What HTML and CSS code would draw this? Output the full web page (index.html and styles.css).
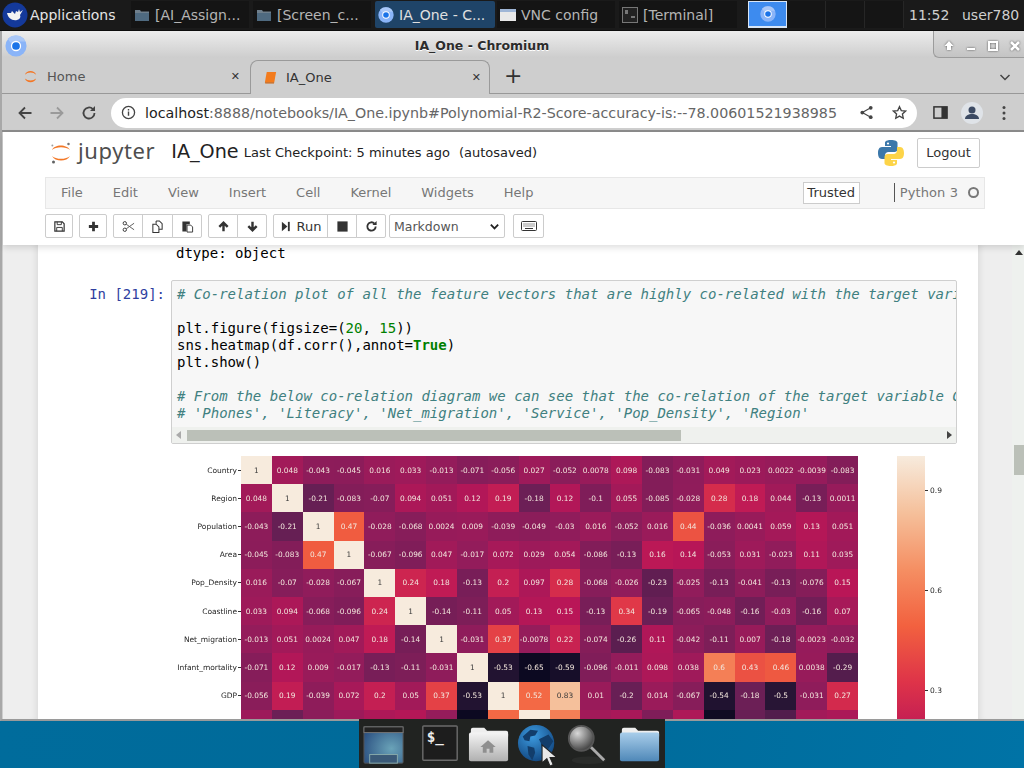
FILE: index.html
```html
<!DOCTYPE html>
<html lang="en">
<head>
  <meta charset="UTF-8" />
  <title>IA_One - Chromium</title>
  <link rel="stylesheet" href="styles.css">
</head>
<body>
  <svg class="defs" width="0" height="0">
    <defs>
      <symbol id="chromium" viewBox="0 0 24 24">
        <circle cx="12" cy="12" r="11.5" fill="#8ab4f8"/>
        <path d="M12 .5A11.5 11.5 0 0 1 22.4 7H12a5 5 0 0 0-4.7 3.2L3 4.2A11.5 11.5 0 0 1 12 .5z" fill="#a9c7f7"/>
        <circle cx="12" cy="12" r="5.6" fill="#fff"/>
        <circle cx="12" cy="12" r="4.2" fill="#1a73e8"/>
      </symbol>
      <symbol id="folder" viewBox="0 0 16 14">
        <path d="M1 2h5l1 1.5h8V13H1z" fill="#6f7f8c"/>
        <path d="M1 5h14v8H1z" fill="#4f6a80"/>
      </symbol>
    </defs>
  </svg>

  <!-- Top panel -->
  <header class="panel">
    <div class="panel-apps">
      <svg class="xfce-logo" viewBox="0 0 26 26">
        <circle cx="13" cy="13" r="12.5" fill="#14399a"/>
        <path d="M5 11c1 5 5 8 10 7 3-.6 4-3 3-5l3-5-3 2-1-3-1 3-2-1-1 3-3-3-1 2z" fill="#f2f2f2"/>
      </svg>
      <span>Applications</span>
    </div>
    <div class="task">
      <svg class="task-icon"><use href="#folder"/></svg><span>[AI_Assign...</span>
    </div>
    <div class="task">
      <svg class="task-icon"><use href="#folder"/></svg><span>[Screen_c...</span>
    </div>
    <div class="task task-active">
      <svg class="task-icon"><use href="#chromium"/></svg><span>IA_One - C...</span>
    </div>
    <div class="task">
      <svg class="task-icon" viewBox="0 0 16 14"><rect x="0" y="1" width="16" height="12" fill="#e8e8e8"/><rect x="0" y="1" width="16" height="3" fill="#9fb6d6"/></svg><span>VNC config</span>
    </div>
    <div class="task">
      <svg class="task-icon" viewBox="0 0 16 16"><rect x=".5" y=".5" width="15" height="15" fill="#222" stroke="#777"/><path d="M3 4h3M3 6h3M9 10h4" stroke="#ccc"/></svg><span>[Terminal]</span>
    </div>
    <div class="pager">
      <div class="pager-cell pager-on"><svg class="pager-icon"><use href="#chromium"/></svg></div>
      <div class="pager-cell"></div>
      <div class="pager-cell"></div>
      <div class="pager-cell"></div>
    </div>
    <div class="clock">11:52</div>
    <div class="user">user780</div>
  </header>

  <!-- Browser window -->
  <main class="window">
    <div class="titlebar">
      <svg class="title-logo"><use href="#chromium"/></svg>
      <span class="title-text">IA_One - Chromium</span>
      <div class="wm-buttons">
        <svg viewBox="0 0 12 12"><path d="M6 1l4.500 5H8v4H4V6H1.500z" fill="#fff"/></svg>
        <svg viewBox="0 0 12 12"><path d="M2 8h8v2H2z" fill="#fff"/></svg>
        <svg viewBox="0 0 12 12"><rect x="2" y="2" width="8" height="8" fill="none" stroke="#fff" stroke-width="2"/></svg>
        <svg viewBox="0 0 12 12"><path d="M2 2l8 8M10 2l-8 8" stroke="#fff" stroke-width="2.500"/></svg>
      </div>
    </div>

    <div class="tabstrip">
      <div class="tab">
        <svg class="tab-icon" viewBox="0 0 16 16"><path d="M2 6a6.500 6.500 0 0 1 12 0 9 9 0 0 0-12 0zM2 10a6.500 6.500 0 0 0 12 0 9 9 0 0 1-12 0z" fill="#f37726"/></svg>
        <span class="tab-title">Home</span>
        <span class="tab-close">✕</span>
      </div>
      <div class="tab tab-active">
        <svg class="tab-icon" viewBox="0 0 16 16"><path d="M4 2h10l-2 11H2z" fill="#f37b1d"/><path d="M2 13h10l-.3 1.500H2.500z" fill="#c9600f"/></svg>
        <span class="tab-title">IA_One</span>
        <span class="tab-close">✕</span>
      </div>
      <span class="tab-new">+</span>
      <svg class="tab-more" viewBox="0 0 12 12"><path d="M1.500 4l4.500 4.500L10.500 4" fill="none" stroke="#444" stroke-width="1.500"/></svg>
    </div>

    <div class="toolbar">
      <svg class="nav-icon" viewBox="0 0 16 16"><path d="M14.500 8H2.500M8 2.500L2.500 8 8 13.500" fill="none" stroke="#444" stroke-width="1.800"/></svg>
      <svg class="nav-icon" viewBox="0 0 16 16"><path d="M1.500 8h12M8 2.500L13.500 8 8 13.500" fill="none" stroke="#9a9a9a" stroke-width="1.800"/></svg>
      <svg class="nav-icon" viewBox="0 0 16 16"><path d="M13.500 8a5.500 5.500 0 1 1-1.600-3.900" fill="none" stroke="#444" stroke-width="1.800"/><path d="M14 1v5H9z" fill="#444"/></svg>
      <div class="omnibox">
        <svg class="omni-info" viewBox="0 0 16 16"><circle cx="8" cy="8" r="6.500" fill="none" stroke="#444" stroke-width="1.400"/><path d="M8 7v4.500M8 4.300v1.500" stroke="#444" stroke-width="1.500"/></svg>
        <span class="url"><b>localhost</b>:8888/notebooks/IA_One.ipynb#Polynomial-R2-Score-accuracy-is:--78.00601521938985</span>
        <svg class="omni-icon" viewBox="0 0 16 16"><circle cx="12.500" cy="3" r="2" fill="#444"/><circle cx="3.500" cy="8" r="2" fill="#444"/><circle cx="12.500" cy="13" r="2" fill="#444"/><path d="M12.500 3l-9 5 9 5" fill="none" stroke="#444" stroke-width="1.200"/></svg>
        <svg class="omni-icon" viewBox="0 0 16 16"><path d="M8 1.800l1.900 4.200 4.600.5-3.400 3.100.9 4.500L8 11.800 4 14.100l.9-4.500L1.500 6.500 6.100 6z" fill="none" stroke="#444" stroke-width="1.400"/></svg>
      </div>
      <svg class="side-icon" viewBox="0 0 16 16"><rect x="1" y="2" width="14" height="12" fill="none" stroke="#333" stroke-width="1.600"/><rect x="9" y="2" width="6" height="12" fill="#333"/></svg>
      <div class="avatar">
        <svg viewBox="0 0 22 22"><circle cx="11" cy="8" r="3.500" fill="#3c4a63"/><path d="M4 17c0-3.500 3.500-5 7-5s7 1.500 7 5z" fill="#3c4a63"/></svg>
      </div>
      <svg class="dots" viewBox="0 0 4 16"><circle cx="2" cy="2.500" r="1.500" fill="#444"/><circle cx="2" cy="8" r="1.500" fill="#444"/><circle cx="2" cy="13.500" r="1.500" fill="#444"/></svg>
    </div>

    <!-- Jupyter page -->
    <div class="page">
      <div class="nb-head">
        <div class="nb-header">
          <svg class="jp-logo" viewBox="0 0 32 30">
            <path d="M4 11C7 3 24 3 28 11 23 6 9 6 4 11zM4 19c4 8 20 8 24 0-5 5-19 5-24 0z" fill="#f37726"/>
            <circle cx="26" cy="3" r="1.700" fill="#767677"/><circle cx="4.500" cy="5" r="1.300" fill="#9e9e9e"/><circle cx="6" cy="27" r="2" fill="#616262"/>
          </svg>
          <span class="jp-word">jupyter</span>
          <span class="nb-name">IA_One</span>
          <span class="nb-check">Last Checkpoint: 5 minutes ago</span>
          <span class="nb-saved">(autosaved)</span>
          <svg class="py-logo" viewBox="0 0 28 28">
            <path d="M14 1c-6 0-6 2.500-6 3v3h6v1H5C2 8 1 11 1 14s1 6 4 6h3v-3.500c0-2 1.500-3.500 3.500-3.500h6c1.800 0 3-1.300 3-3V4c0-1.800-2.500-3-6.500-3z" fill="#3c78aa"/>
            <path d="M14 27c6 0 6-2.500 6-3v-3h-6v-1h9c3 0 4-3 4-6s-1-6-4-6h-3v3.500c0 2-1.500 3.500-3.500 3.500h-6c-1.800 0-3 1.300-3 3v6c0 1.800 2.500 3 6.500 3z" fill="#fdd448"/>
            <circle cx="11" cy="4.500" r="1.100" fill="#fff"/><circle cx="17" cy="23.500" r="1.100" fill="#fff"/>
          </svg>
          <button class="logout">Logout</button>
        </div>
        <nav class="menubar">
          <span>File</span><span>Edit</span><span>View</span><span>Insert</span><span>Cell</span><span>Kernel</span><span>Widgets</span><span>Help</span>
          <span class="trusted">Trusted</span>
          <span class="kernel-name">Python 3</span>
          <span class="kernel-dot"></span>
        </nav>
        <div class="nb-tools">
          <div class="btn-group"><button class="btn btn-icon"><svg viewBox="0 0 14 14"><path d="M2 2h8l2 2v8H2z" fill="none" stroke="#333" stroke-width="1.300"/><path d="M4.500 2v3h4.500V2M4 12V8h6v4" fill="none" stroke="#333"/></svg></button></div>
          <div class="btn-group"><button class="btn btn-icon"><svg viewBox="0 0 14 14"><path d="M7 2v10M2 7h10" stroke="#333" stroke-width="3"/></svg></button></div>
          <div class="btn-group">
            <button class="btn btn-wide"><svg viewBox="0 0 14 14"><circle cx="3" cy="3.500" r="1.800" fill="none" stroke="#333"/><circle cx="3" cy="10.500" r="1.800" fill="none" stroke="#333"/><path d="M4.500 4.500L13 10.500M4.500 9.500L13 3.500" stroke="#555"/></svg></button>
            <button class="btn btn-mid"><svg viewBox="0 0 14 14"><path d="M5.500 1h3.500l3 3v6H8.500M5.500 1v3" fill="none" stroke="#333" stroke-width="1.100"/><path d="M2 4.500h3.500L8.500 7.500v6H2z" fill="#fff" stroke="#333" stroke-width="1.100"/></svg></button>
            <button class="btn btn-wide"><svg viewBox="0 0 14 14"><path d="M1.500 1.500h8v3H6v8H1.500z" fill="#333"/><path d="M6.500 5.500h4l2 2v5.500h-6z" fill="#fff" stroke="#333"/></svg></button>
          </div>
          <div class="btn-group">
            <button class="btn btn-wide"><svg viewBox="0 0 14 14"><path d="M7 12V3M2.500 7.500L7 3l4.500 4.500" fill="none" stroke="#333" stroke-width="2.600"/></svg></button>
            <button class="btn btn-wide"><svg viewBox="0 0 14 14"><path d="M7 2v9M2.500 6.500L7 11l4.500-4.500" fill="none" stroke="#333" stroke-width="2.600"/></svg></button>
          </div>
          <div class="btn-group">
            <button class="btn btn-run"><svg viewBox="0 0 14 14"><path d="M2 2l6 5-6 5z" fill="#333"/><path d="M9.500 2v10" stroke="#333" stroke-width="2"/></svg>Run</button>
            <button class="btn btn-wide"><svg viewBox="0 0 14 14"><rect x="1.500" y="1.500" width="11" height="11" fill="#333"/></svg></button>
            <button class="btn btn-wide"><svg viewBox="0 0 14 14"><path d="M11.500 7a4.500 4.500 0 1 1-1.300-3.200" fill="none" stroke="#333" stroke-width="2"/><path d="M12.500 1v4.500H8z" fill="#333"/></svg></button>
          </div>
          <div class="cell-type">
            <span>Markdown</span>
            <svg viewBox="0 0 12 12"><path d="M2 4l4 4 4-4" fill="none" stroke="#222" stroke-width="2"/></svg>
          </div>
          <button class="btn btn-keys"><svg viewBox="0 0 16 12"><rect x=".5" y="1.500" width="15" height="9" rx="1" fill="none" stroke="#333"/><path d="M2.500 4h11M2.500 6h11" stroke="#333" stroke-dasharray="1 1"/><path d="M4 8.500h8" stroke="#333"/></svg></button>
        </div>
      </div>

      <div class="nb-body">
        <div class="nb-side"></div>
        <div class="notebook">
          <pre class="stream">dtype: object</pre>

          <div class="cell">
            <div class="prompt">In [219]:</div>
            <div class="input">
              <pre class="code"><i># Co-relation plot of all the feature vectors that are highly co-related with the target variable GDP</i>

plt.figure(figsize=(<em>20</em>, <em>15</em>))
sns.heatmap(df.corr(),annot=<strong>True</strong>)
plt.show()

<i># From the below co-relation diagram we can see that the co-relation of the target variable GDP is high with</i>
<i># 'Phones', 'Literacy', 'Net_migration', 'Service', 'Pop_Density', 'Region'</i></pre>
              <div class="hscroll">
                <span class="arrow arrow-left"></span>
                <div class="hscroll-track"><div class="hscroll-thumb"></div></div>
                <span class="arrow arrow-right"></span>
              </div>
            </div>
          </div>

          <div class="figure">
            <div class="hm-labels" id="hmLabels"></div>
            <div class="heatmap" id="heatmap"></div>
            <div class="colorbar"></div>
            <div class="cbar-ticks">
              <span>0.9</span>
              <span>0.6</span>
              <span>0.3</span>
            </div>
          </div>
        </div>
        <div class="nb-side nb-side-right"></div>
        <div class="scrollbar">
          <span class="arrow arrow-up"></span>
          <div class="scrollbar-thumb"></div>
        </div>
      </div>
    </div>
  </main>

  <div class="desktop"></div>

  <!-- Dock -->
  <div class="dock">
    <svg class="dock-icon" viewBox="0 0 44 44">
      <defs><radialGradient id="dg" cx=".7" cy=".6" r=".8"><stop offset="0" stop-color="#6aa3b8"/><stop offset="1" stop-color="#2a4f80"/></radialGradient></defs>
      <rect x="1" y="3" width="41" height="38" rx="1" fill="url(#dg)" stroke="#555"/>
      <rect x="1" y="3" width="41" height="6" fill="#222" stroke="#777"/>
      <rect x="7" y="32" width="29" height="9" fill="#3b5a78" stroke="#8aa"/>
    </svg>
    <svg class="dock-icon dock-sep" viewBox="0 0 44 44">
      <rect x="4" y="2" width="36" height="36" rx="1" fill="#1d1d1d" stroke="#6b6b6b" stroke-width="1.500"/>
      <text class="dock-prompt" x="8" y="19">$_</text>
    </svg>
    <svg class="dock-icon" viewBox="0 0 44 44">
      <defs><linearGradient id="fg" x1="0" y1="0" x2="0" y2="1"><stop offset="0" stop-color="#f4f4f4"/><stop offset="1" stop-color="#b0b0b0"/></linearGradient></defs>
      <path d="M3 6a2 2 0 0 1 2-2h12l3 3h20a2 2 0 0 1 2 2v4H3z" fill="#eee"/>
      <rect x="1" y="9" width="41" height="30" rx="2" fill="url(#fg)"/>
      <path d="M21 17l-8 7h2.500v6h4v-4h3v4h4v-6H29z" fill="#8f8f8f"/>
    </svg>
    <svg class="dock-icon" viewBox="0 0 44 44">
      <defs><radialGradient id="gg" cx=".4" cy=".3" r=".8"><stop offset="0" stop-color="#3d9be0"/><stop offset="1" stop-color="#0d3f78"/></radialGradient></defs>
      <circle cx="20" cy="20" r="19" fill="url(#gg)"/>
      <path d="M6 13l8-7 8 1-3 5-5 1-1 5-5-1zM23 16l10-5 5 7-5 8-7 0-1-6zM11 23l7 2 1 5-3 8-4-6z" fill="#123d6b"/>
    </svg>
    <svg class="dock-icon" viewBox="0 0 44 44">
      <defs><radialGradient id="mg" cx=".35" cy=".3" r=".8"><stop offset="0" stop-color="#d8d8d8"/><stop offset="1" stop-color="#333"/></radialGradient></defs>
      <ellipse cx="24" cy="38" rx="18" ry="4" fill="#2a2c2a"/>
      <path d="M26 24l14 14" stroke="#aaa" stroke-width="3"/>
      <circle cx="16" cy="15" r="13" fill="url(#mg)" stroke="#555" stroke-width="2"/>
    </svg>
    <svg class="dock-icon dock-sep-last" viewBox="0 0 44 44">
      <defs><linearGradient id="bf" x1="0" y1="0" x2="0" y2="1"><stop offset="0" stop-color="#a8cdea"/><stop offset="1" stop-color="#4f88b8"/></linearGradient></defs>
      <path d="M3 6a2 2 0 0 1 2-2h12l3 3h20a2 2 0 0 1 2 2v4H3z" fill="#eee"/>
      <rect x="1" y="9" width="41" height="30" rx="2" fill="url(#bf)"/>
    </svg>
    <svg class="cursor" viewBox="0 0 16 22"><path d="M1 1v17l4.500-4 3 7 3-1.500-3-6.500H15z" fill="#e8e8e8" stroke="#222"/></svg>
  </div>

  <script src="heatmap.js"></script>
</body>
</html>
```

FILE: styles.css
```css
* {
  box-sizing: border-box;
}

html, body {
  margin: 0;
  height: 100%;
}

body {
  width: 1024px;
  height: 768px;
  overflow: hidden;
  position: relative;
  display: flex;
  flex-direction: column;
  font-family: "DejaVu Sans", sans-serif;
  background: #006c9c;
}

.defs {
  position: absolute;
}

/* top panel */
.panel {
  height: 31px;
  flex: none;
  display: flex;
  align-items: flex-start;
  padding-top: 1px;
  background: #1a1a1a;
  color: #cfcfcf;
  font-size: 14px;
  border-bottom: 1px solid #0c0c0c;
}

.panel-apps {
  width: 131px;
  height: 28px;
  display: flex;
  align-items: center;
  gap: 2px;
  padding-left: 2px;
  color: #e4e4e4;
}

.xfce-logo {
  width: 26px;
  height: 26px;
}

.task {
  width: 118px;
  height: 27px;
  margin-right: 4px;
  padding-left: 3px;
  display: flex;
  align-items: center;
  gap: 5px;
  background: #141414;
  color: #b5b5b5;
  white-space: nowrap;
  overflow: hidden;
}

.task-active {
  width: 120px;
  margin-right: 2px;
  background: #1f4468;
  color: #e0e0e0;
  border-radius: 2px;
}

.task-icon {
  width: 16px;
  height: 16px;
  flex: none;
}

.pager {
  display: flex;
  height: 28px;
  margin-left: 7px;
}

.pager-cell {
  width: 39px;
  height: 27px;
  border-right: 1px solid #262626;
  background: #151515;
}

.pager-on {
  display: flex;
  align-items: center;
  justify-content: center;
  background: #3d8bef;
  border: 1px solid #d8e6f7;
  border-bottom: 2px solid #d8e6f7;
}

.pager-icon {
  width: 16px;
  height: 16px;
}

.clock {
  margin-left: 5px;
  width: 53px;
  line-height: 28px;
}

.user {
  line-height: 28px;
}

/* window frame */
.window {
  height: 690px;
  flex: none;
  display: flex;
  flex-direction: column;
  border-left: 2px solid #a8a8a8;
  border-bottom: 2px solid #9a9a9a;
  background: #cecece;
}

.titlebar {
  height: 27px;
  flex: none;
  position: relative;
  display: flex;
  align-items: center;
  justify-content: center;
  padding-top: 2px;
  background: linear-gradient(#ececec, #cdcdcd);
}

.title-logo {
  position: absolute;
  left: 3px;
  top: 4px;
  width: 22px;
  height: 22px;
}

.title-text {
  margin-right: 62px;
  font-size: 12.500px;
  font-weight: bold;
  color: #2c2c2c;
  text-shadow: 0 1px 0 #fff;
}

.wm-buttons {
  position: absolute;
  right: 0;
  top: 0;
  width: 91px;
  height: 27px;
  display: flex;
  align-items: center;
  gap: 10px;
  padding: 3px 0 0 9px;
  background: linear-gradient(#dcdcdc, #c4c4c4);
  border-left: 1px solid #9c9c9c;
  border-bottom: 1px solid #9c9c9c;
  border-bottom-left-radius: 6px;
}

.wm-buttons svg {
  width: 12px;
  height: 12px;
  flex: none;
  filter: drop-shadow(0 0 1px #555);
}

.tabstrip {
  height: 36px;
  flex: none;
  display: flex;
  align-items: flex-end;
  position: relative;
  padding-left: 3px;
  background: #cecece;
  border-bottom: 1px solid #989898;
}

.tab {
  width: 245px;
  height: 33px;
  display: flex;
  align-items: center;
  gap: 9px;
  padding: 0 10px 0 18px;
  color: #555;
  font-size: 13px;
}

.tab-active {
  width: 240px;
  height: 34px;
  margin-bottom: -1px;
  padding: 0 8px 1px 12px;
  gap: 8px;
  background: #cecece;
  color: #333;
  border: 1px solid #9a9a9a;
  border-bottom: none;
  border-radius: 8px 8px 0 0;
}

.tab-icon {
  width: 15px;
  height: 15px;
  flex: none;
}

.tab-title {
  flex: 1;
}

.tab-close {
  font-size: 11px;
  color: #333;
}

.tab-new {
  margin: 0 0 1px 14px;
  line-height: 33px;
  font-size: 22px;
  color: #333;
}

.tab-more {
  position: absolute;
  right: 13px;
  top: 13px;
  width: 12px;
  height: 12px;
}

.toolbar {
  height: 38px;
  flex: none;
  display: flex;
  align-items: center;
  padding: 1px 0 0 15px;
  background: #cecece;
  border-bottom: 2px solid #8c8c8c;
}

.nav-icon {
  width: 16px;
  height: 16px;
  margin-right: 16px;
  flex: none;
}

.omnibox {
  width: 806px;
  height: 30px;
  margin-left: -2px;
  flex: none;
  display: flex;
  align-items: center;
  padding: 0 10px;
  background: #fff;
  border-radius: 15px;
  color: #666;
  font-size: 14.250px;
  white-space: nowrap;
}

.omni-info {
  width: 15px;
  height: 15px;
  flex: none;
  margin-right: 9px;
}

.url {
  flex: 1;
}

.url b {
  font-weight: normal;
  color: #222;
}

.omni-icon {
  width: 15px;
  height: 15px;
  flex: none;
  margin-left: 18px;
}

.side-icon {
  width: 15px;
  height: 15px;
  margin-left: 16px;
  flex: none;
}

.avatar {
  width: 22px;
  height: 22px;
  margin-left: 13px;
  flex: none;
  border-radius: 50%;
  background: #dfe3e8;
}

.avatar svg {
  display: block;
}

.dots {
  width: 4px;
  height: 16px;
  margin-left: 19px;
  flex: none;
}

/* notebook chrome */
.page {
  flex: 1;
  min-height: 0;
  display: flex;
  flex-direction: column;
  background: #fff;
  margin-left: 1px;
}

.nb-head {
  height: 113px;
  flex: none;
  position: relative;
  z-index: 1;
  background: #fff;
  box-shadow: 0 3px 6px rgba(0, 0, 0, 0.12);
}

.nb-header {
  height: 45px;
  display: flex;
  align-items: center;
  padding: 0 44px 4px 46px;
}

.jp-logo {
  width: 24px;
  height: 28px;
  flex: none;
}

.jp-word {
  margin: 0 0 5px 5px;
  font-family: "Noto Sans", sans-serif;
  font-size: 22px;
  letter-spacing: 0.6px;
  color: #4e4e4e;
}

.nb-name {
  margin: 0 0 3px 16px;
  font-size: 19.200px;
  color: #222;
}

.nb-check {
  margin-left: 5px;
  font-size: 13px;
  color: #222;
}

.nb-saved {
  margin-left: 9px;
  font-size: 13px;
  color: #222;
}

.py-logo {
  width: 28px;
  height: 28px;
  margin-left: auto;
}

.logout {
  width: 63px;
  height: 30px;
  margin-left: 12px;
  padding: 0;
  background: #fff;
  border: 1px solid #ccc;
  border-radius: 2px;
  color: #333;
  font-family: inherit;
  font-size: 13px;
}

.menubar {
  height: 32px;
  margin: 0 39px 0 42px;
  display: flex;
  align-items: center;
  gap: 30px;
  padding: 0 5px 1px 15px;
  background: #f6f6f6;
  border: 1px solid #e7e7e7;
  color: #777;
  font-size: 13px;
}

.trusted {
  margin-left: auto;
  margin-right: 6px;
  width: 57px;
  height: 22px;
  line-height: 20px;
  text-align: center;
  background: #fff;
  border: 1px solid #ccc;
  color: #333;
}

.kernel-name {
  padding-left: 5px;
  margin-left: -2px;
  border-left: 1px solid #555;
  line-height: 19px;
  letter-spacing: 0.1px;
}

.kernel-dot {
  width: 11px;
  height: 11px;
  margin-left: -20px;
  border: 2px solid #777;
  border-radius: 50%;
}

.nb-tools {
  display: flex;
  align-items: center;
  margin: 5px 0 0 42px;
  height: 24px;
}

.btn-group {
  display: flex;
  margin-right: 6px;
}

.btn {
  height: 24px;
  padding: 0;
  display: flex;
  align-items: center;
  justify-content: center;
  background: #fff;
  border: 1px solid #ccc;
  margin-left: -1px;
  color: #333;
  font-family: inherit;
  font-size: 13px;
}

.btn-group .btn:first-child {
  margin-left: 0;
  border-radius: 2px 0 0 2px;
}

.btn-group .btn:last-child {
  border-radius: 0 2px 2px 0;
}

.btn-group .btn:only-child {
  border-radius: 2px;
}

.btn svg {
  width: 13px;
  height: 13px;
}

.btn-icon {
  width: 28px;
}

.btn-wide {
  width: 30px;
}

.btn-mid {
  width: 31px;
}

.btn-run {
  width: 55px;
  gap: 4px;
}

.cell-type {
  width: 116px;
  height: 24px;
  margin-left: -3px;
  padding: 0 4px;
  display: flex;
  align-items: center;
  justify-content: space-between;
  background: #fff;
  border: 1px solid #ccc;
  border-radius: 2px;
  color: #555;
  font-size: 12.500px;
}

.cell-type svg {
  width: 11px;
  height: 11px;
}

.btn-keys {
  width: 31px;
  margin-left: 8px;
  border-radius: 2px;
}

.btn-keys svg {
  width: 16px;
  height: 12px;
}

/* notebook body */
.nb-body {
  flex: 1;
  min-height: 0;
  display: flex;
  overflow: hidden;
}

.nb-side {
  width: 35px;
  flex: none;
  background: #eeeeee;
  box-shadow: inset -6px 0 6px -4px rgba(0, 0, 0, 0.08);
}

.nb-side-right {
  width: 34px;
  box-shadow: inset 6px 0 6px -4px rgba(0, 0, 0, 0.08);
}

.notebook {
  width: 940px;
  flex: none;
  overflow: hidden;
  background: #fff;
  padding-left: 133px;
}

.stream {
  margin: 0 0 18px;
  padding-left: 5px;
  height: 17px;
  font: 14px/17px "DejaVu Sans Mono", monospace;
  color: #000;
}

.cell {
  position: relative;
  width: 786px;
}

.prompt {
  position: absolute;
  right: 100%;
  top: 6px;
  margin-right: 6px;
  font: 14px/17px "DejaVu Sans Mono", monospace;
  color: #303f9f;
  white-space: nowrap;
}

.input {
  height: 164px;
  background: #f7f7f7;
  border: 1px solid #cfcfcf;
  border-radius: 2px;
  overflow: hidden;
}

.code {
  margin: 0;
  height: 146px;
  padding: 5px 0 0 5px;
  overflow: hidden;
  font: 14px/17px "DejaVu Sans Mono", monospace;
  color: #000;
}

.code i {
  color: #408080;
}

.code em {
  font-style: normal;
  color: #008000;
}

.code strong {
  color: #008000;
}

.hscroll {
  height: 16px;
  display: flex;
  align-items: center;
  background: #eff1ee;
}

.hscroll-track {
  flex: 1;
  height: 11px;
  margin: 0 5px 0 6px;
}

.hscroll-thumb {
  width: 494px;
  height: 11px;
  background: #bbc0b8;
}

.arrow {
  width: 0;
  height: 0;
  flex: none;
  border-style: solid;
  border-color: transparent;
}

.arrow-left {
  margin-left: 4px;
  border-width: 4px 5px 4px 0;
  border-right-color: #aaa;
}

.arrow-right {
  margin-right: 4px;
  border-width: 4px 0 4px 5px;
  border-left-color: #444;
}

.figure {
  margin: 12px 0 0 0;
  display: flex;
  align-items: flex-start;
  background: #fff;
  filter: blur(0.4px);
}

.hm-labels {
  width: 70px;
  flex: none;
  font-size: 7.500px;
  color: #262626;
}

.hm-label {
  height: 28.200px;
  display: flex;
  align-items: center;
  justify-content: flex-end;
  white-space: nowrap;
}

.hm-label::after {
  content: "";
  width: 3px;
  height: 1px;
  margin-left: 1px;
  background: #333;
}

.heatmap {
  width: 617px;
  flex: none;
  display: grid;
  grid-template-columns: repeat(20, 1fr);
  grid-auto-rows: 28.200px;
}

.hm-cell {
  display: flex;
  align-items: center;
  justify-content: center;
  font-size: 7.400px;
  color: #f2e6dc;
}

.hm-dark {
  color: #3a3a3a;
}

.colorbar {
  width: 28px;
  height: 566px;
  flex: none;
  margin-left: 39px;
  background: linear-gradient(#f7ebdd, #f5c09b 10%, #f58f63 20%, #f2613f 30%, #de3349 40%, #b91657 50%, #921c5b 60%, #6a1f56 70%, #451c47 80%, #221331 90%, #03051a);
}

.cbar-ticks {
  display: flex;
  flex-direction: column;
  gap: 88px;
  padding-top: 28px;
  font-size: 7.500px;
  color: #262626;
}

.cbar-ticks span {
  height: 12px;
  display: flex;
  align-items: center;
}

.cbar-ticks span::before {
  content: "";
  width: 3px;
  height: 1px;
  margin-right: 2px;
  background: #333;
}

/* page scrollbar */
.scrollbar {
  flex: 1;
  position: relative;
  background: #eef1ee;
}

.arrow-up {
  display: block;
  margin: 5px 0 0 3px;
  border-width: 0 4px 5px 4px;
  border-bottom-color: #333;
}

.scrollbar-thumb {
  position: absolute;
  left: 2px;
  right: 0;
  top: 200px;
  height: 30px;
  background: #bbc0b8;
}

/* desktop and dock */
.desktop {
  flex: 1;
  background: linear-gradient(100deg, #006c9c, #006a99 50%, #0073a6);
}

.dock {
  position: absolute;
  left: 359px;
  bottom: 0;
  width: 306px;
  height: 49px;
  display: flex;
  align-items: flex-start;
  gap: 7px;
  padding: 5px 0 0 4px;
  background: #212321;
}

.dock-icon {
  width: 42px;
  height: 42px;
  flex: none;
}

.dock-prompt {
  font-family: "DejaVu Sans Mono", monospace;
  font-size: 15px;
  font-weight: bold;
  fill: #eee;
}

.dock-sep {
  margin-left: 7px;
}

.dock-sep-last {
  margin-left: 4px;
}

.cursor {
  position: absolute;
  left: 182px;
  top: 24px;
  width: 17px;
  height: 25px;
}
```

FILE: heatmap.js
```js
var labels = ["Country", "Region", "Population", "Area", "Pop_Density", "Coastline",
  "Net_migration", "Infant_mortality", "GDP", "Literacy"];

var rows = [
  ["1","0.048","-0.043","-0.045","0.016","0.033","-0.013","-0.071","-0.056","0.027","-0.052","0.0078","0.098","-0.083","-0.031","0.049","0.023","0.0022","-0.0039","-0.083"],
  ["0.048","1","-0.21","-0.083","-0.07","0.094","0.051","0.12","0.19","-0.18","0.12","-0.1","0.055","-0.085","-0.028","0.28","0.18","0.044","-0.13","0.0011"],
  ["-0.043","-0.21","1","0.47","-0.028","-0.068","0.0024","0.009","-0.039","-0.049","-0.03","0.016","-0.052","0.016","0.44","-0.036","0.0041","0.059","0.13","0.051"],
  ["-0.045","-0.083","0.47","1","-0.067","-0.096","0.047","-0.017","0.072","0.029","0.054","-0.086","-0.13","0.16","0.14","-0.053","0.031","-0.023","0.11","0.035"],
  ["0.016","-0.07","-0.028","-0.067","1","0.24","0.18","-0.13","0.2","0.097","0.28","-0.068","-0.026","-0.23","-0.025","-0.13","-0.041","-0.13","-0.076","0.15"],
  ["0.033","0.094","-0.068","-0.096","0.24","1","-0.14","-0.11","0.05","0.13","0.15","-0.13","0.34","-0.19","-0.065","-0.048","-0.16","-0.03","-0.16","0.07"],
  ["-0.013","0.051","0.0024","0.047","0.18","-0.14","1","-0.031","0.37","-0.0078","0.22","-0.074","-0.26","0.11","-0.042","-0.11","0.007","-0.18","-0.0023","-0.032"],
  ["-0.071","0.12","0.009","-0.017","-0.13","-0.11","-0.031","1","-0.53","-0.65","-0.59","-0.096","-0.011","0.098","0.038","0.6","0.43","0.46","0.0038","-0.29"],
  ["-0.056","0.19","-0.039","0.072","0.2","0.05","0.37","-0.53","1","0.52","0.83","0.01","-0.2","0.014","-0.067","-0.54","-0.18","-0.5","-0.031","0.27"],
  ["0.027","-0.18","-0.049","0.029","0.097","0.13","-0.0078","-0.65","0.52","1","0.6","0.05","0.08","-0.1","0.1","-0.63","-0.2","-0.3","0.05","0.09"]
];

// rocket colour map, low to high
var stops = [[3,5,26],[34,19,49],[69,28,71],[106,31,86],[146,28,91],[185,22,87],
  [222,51,73],[242,97,63],[245,143,99],[245,192,155],[247,235,221]];

function colour(v) {
  var t = Math.max(0, Math.min(1, (v + 0.7) / 1.7)) * (stops.length - 1);
  var i = Math.min(Math.floor(t), stops.length - 2);
  var f = t - i;
  var c = stops[i].map(function (a, k) {
    return Math.round(a + (stops[i + 1][k] - a) * f);
  });
  return "rgb(" + c.join(",") + ")";
}

var labelBox = document.getElementById("hmLabels");
labels.forEach(function (name) {
  var el = document.createElement("div");
  el.className = "hm-label";
  el.textContent = name;
  labelBox.appendChild(el);
});

var grid = document.getElementById("heatmap");
rows.forEach(function (row) {
  row.forEach(function (value) {
    var el = document.createElement("div");
    el.className = "hm-cell";
    if (Number(value) > 0.7) el.classList.add("hm-dark");
    el.style.background = colour(Number(value));
    el.textContent = value;
    grid.appendChild(el);
  });
});
```
